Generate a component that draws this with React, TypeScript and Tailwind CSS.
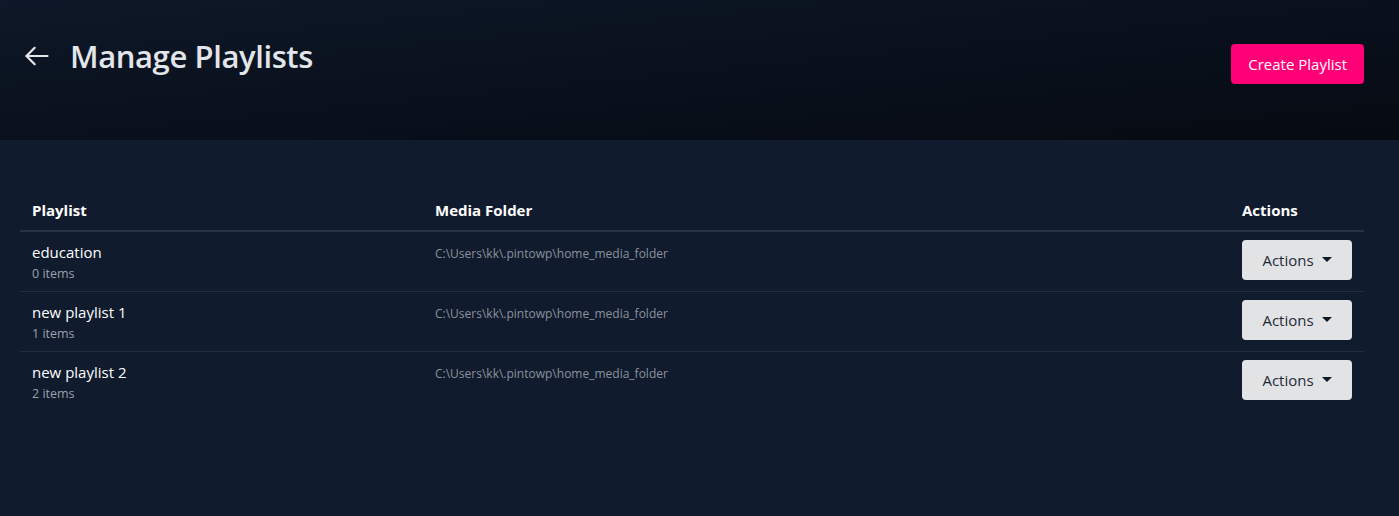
import React from 'react';

const playlists = [
  { name: 'education', count: 0 },
  { name: 'new playlist 1', count: 1 },
  { name: 'new playlist 2', count: 2 },
];

const folder = 'C:\\Users\\kk\\.pintowp\\home_media_folder';

const App: React.FC = () => {
  return (
    <div className="min-h-[516px] bg-[#101b2d] text-[#e5e7eb]" style={{ fontFamily: '"Open Sans", "Noto Sans", sans-serif' }}>
      {/* Header */}
      <div className="h-[140px] bg-gradient-to-br from-[#0e1828] to-[#060a12] flex items-start justify-between pl-[23px] pr-[35px] pt-[36px]">
        <div className="flex items-center gap-[19px]">
          <svg width="28" height="28" viewBox="0 0 24 24" fill="none" stroke="#e5e7eb" strokeWidth="1.9" strokeLinecap="round" strokeLinejoin="round">
            <path d="M21 12H3" />
            <path d="M10 5l-7 7 7 7" />
          </svg>
          <h1 className="text-[31px] font-semibold text-[#e2e5ea] leading-[40px] tracking-[-0.4px]">Manage Playlists</h1>
        </div>
        <button className="mt-[8px] h-[40px] px-[17px] rounded-[4px] bg-[#ff0077] text-white text-[15px]">
          Create Playlist
        </button>
      </div>

      {/* Table */}
      <div className="pl-[20px] pt-[46px] pr-[35px]">
        <table className="w-full border-collapse">
          <thead>
            <tr className="border-b-2 border-[#2a3342] text-left">
              <th className="px-[12px] pt-[12px] pb-[8px] text-[15px] font-bold leading-[24px] w-[403px] text-white">Playlist</th>
              <th className="px-[12px] pt-[12px] pb-[8px] text-[15px] font-bold leading-[24px] text-white">Media Folder</th>
              <th className="px-[12px] pt-[12px] pb-[8px] text-[15px] font-bold leading-[24px] w-[123px] text-white">Actions</th>
            </tr>
          </thead>
          <tbody>
            {playlists.map((p, i) => (
              <tr key={p.name} className={i > 0 ? 'border-t border-[#252e3d]' : ''}>
                <td className="px-[12px] pt-[8px] pb-[7px] align-top">
                  <div className="text-[15px] leading-[24px] text-white">{p.name}</div>
                  <div className="text-[12.5px] leading-[20px] text-[#9aa1ab]">{p.count} items</div>
                </td>
                <td className="px-[12px] pt-[12px] align-top">
                  <div className="text-[12px] leading-[20px] text-[#8b929c]">{folder}</div>
                </td>
                <td className="px-[12px] pt-[8px] align-top">
                  <button className="w-[110px] h-[40px] rounded-[4px] bg-[#e2e3e5] text-[#1f2937] text-[15px] flex items-center justify-center gap-[8px]">
                    Actions
                    <svg width="10" height="6" viewBox="0 0 10 6"><path d="M0 0h10L5 5z" fill="#111827" /></svg>
                  </button>
                </td>
              </tr>
            ))}
          </tbody>
        </table>
      </div>
    </div>
  );
};

export default App;
